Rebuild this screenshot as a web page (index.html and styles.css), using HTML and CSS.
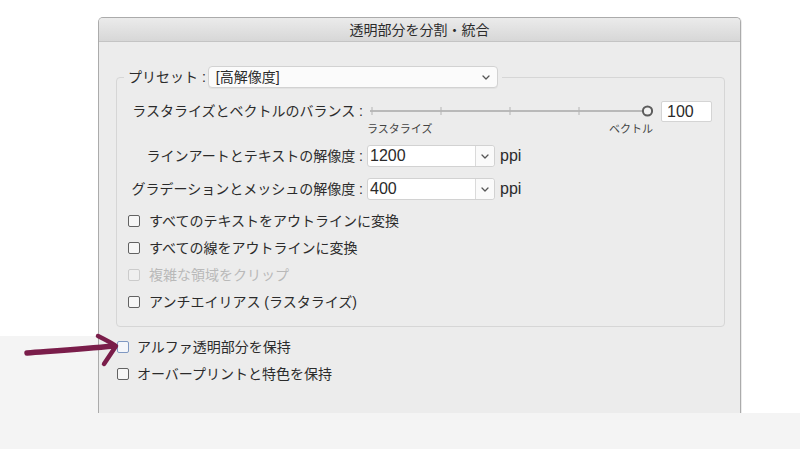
FILE: index.html
```html
<!DOCTYPE html>
<html lang="ja">
<head>
<meta charset="utf-8">
<title>透明部分を分割・統合</title>
<link rel="stylesheet" href="styles.css">
</head>
<body>
<div class="stage">
  <div class="dialog">
    <div class="titlebar">透明部分を分割・統合</div>
    <div class="content">
      <fieldset class="group">
        <legend class="preset">
          <span class="preset-label">プリセット :</span>
          <span class="popup">
            <span class="popup-value">[高解像度]</span>
            <svg class="chev" width="8" height="5" viewBox="0 0 8 5"><path d="M1 1 L4 4 L7 1" /></svg>
          </span>
        </legend>

        <div class="row slider-row">
          <span class="lbl">ラスタライズとベクトルのバランス :</span>
          <div class="ctrl">
            <svg class="slider" width="286" height="22" viewBox="0 0 286 22">
              <line class="track" x1="3" y1="11" x2="276" y2="11" />
              <line class="tick" x1="5" y1="7" x2="5" y2="15" />
              <line class="tick" x1="74" y1="7" x2="74" y2="15" />
              <line class="tick" x1="143" y1="7" x2="143" y2="15" />
              <line class="tick" x1="212" y1="7" x2="212" y2="15" />
              <circle class="knob" cx="280.5" cy="11" r="4.6" />
            </svg>
            <span class="numbox">100</span>
          </div>
        </div>

        <div class="row scale-row">
          <span></span>
          <div class="scale"><span>ラスタライズ</span><span>ベクトル</span></div>
        </div>

        <div class="row combo-row">
          <span class="lbl">ラインアートとテキストの解像度 :</span>
          <div class="ctrl">
            <span class="combo">
              <span class="combo-value">1200</span>
              <span class="combo-btn"><svg class="chev" width="8" height="5" viewBox="0 0 8 5"><path d="M1 1 L4 4 L7 1" /></svg></span>
            </span>
            <span class="unit">ppi</span>
          </div>
        </div>

        <div class="row combo-row">
          <span class="lbl">グラデーションとメッシュの解像度 :</span>
          <div class="ctrl">
            <span class="combo">
              <span class="combo-value">400</span>
              <span class="combo-btn"><svg class="chev" width="8" height="5" viewBox="0 0 8 5"><path d="M1 1 L4 4 L7 1" /></svg></span>
            </span>
            <span class="unit">ppi</span>
          </div>
        </div>

        <div class="checks">
          <div class="check"><span class="box"></span><span>すべてのテキストをアウトラインに変換</span></div>
          <div class="check"><span class="box"></span><span>すべての線をアウトラインに変換</span></div>
          <div class="check disabled"><span class="box"></span><span>複雑な領域をクリップ</span></div>
          <div class="check"><span class="box"></span><span>アンチエイリアス (ラスタライズ)</span></div>
        </div>
      </fieldset>

      <div class="outer-checks">
        <div class="check"><span class="box focus"></span><span>アルファ透明部分を保持</span></div>
        <div class="check"><span class="box"></span><span>オーバープリントと特色を保持</span></div>
      </div>
    </div>
  </div>

  <svg class="arrow" width="110" height="40" viewBox="0 0 110 40">
    <path class="shaft" d="M9 21 C 35 19, 65 17, 96 14" />
    <path d="M80 4 C 88 8, 94 11, 98 14 C 94 20, 90 26, 86 32" />
  </svg>
</div>
</body>
</html>
```

FILE: styles.css
```css
* {
  box-sizing: border-box;
}

html, body {
  margin: 0;
  padding: 0;
  background: #ffffff;
}

body {
  font-family: "Liberation Sans", "Noto Sans CJK JP", sans-serif;
  color: #2b2b2b;
  font-size: 14px;
}

.stage {
  position: relative;
  width: 800px;
  height: 449px;
  overflow: hidden;
  padding: 17px 0 0 98px;
  background:
    linear-gradient(#f4f4f4, #f4f4f4) 0 336px / 98px 113px no-repeat,
    linear-gradient(#f4f4f4, #f4f4f4) 0 413px / 800px 36px no-repeat,
    #ffffff;
}

.dialog {
  width: 643px;
  height: 396px;
  border: 1px solid #ababab;
  border-bottom: none;
  border-radius: 5px 5px 0 0;
  background: #ececec;
  box-shadow: 1px 0 0 rgba(0, 0, 0, 0.08);
  display: flex;
  flex-direction: column;
}

.titlebar {
  height: 24px;
  flex: none;
  border-bottom: 1px solid #c4c4c4;
  border-radius: 4px 4px 0 0;
  background: linear-gradient(#ebebeb, #d7d7d7);
  text-align: center;
  font-family: "Noto Sans CJK JP", sans-serif;
  font-size: 14px;
  line-height: 23px;
  color: #2b2b2b;
}

.content {
  flex: 1;
  padding: 24px 15px 0 17px;
}

.group {
  margin: 0;
  padding: 12px 0 14px 0;
  border: 1px solid #d6d6d6;
  border-radius: 4px;
  min-width: 0;
}

.preset {
  margin-left: 7px;
  padding: 0 4px 0 4px;
  display: flex;
  align-items: center;
  height: 22px;
}

.preset-label {
  line-height: 20px;
  margin-right: 2px;
  white-space: nowrap;
}

.popup {
  width: 290px;
  height: 22px;
  display: flex;
  align-items: center;
  justify-content: space-between;
  padding: 0 7px 0 7px;
  background: #fbfbfb;
  border: 1px solid #d2d2d2;
  border-radius: 4px;
  box-shadow: 0 1px 0 rgba(0, 0, 0, 0.04);
}

.popup-value {
  line-height: 20px;
  font-size: 14px;
}

.chev path {
  fill: none;
  stroke: #555555;
  stroke-width: 1.3;
  stroke-linecap: round;
  stroke-linejoin: round;
}

.row {
  display: grid;
  grid-template-columns: 246px 1fr;
  column-gap: 4px;
  align-items: center;
  height: 22px;
}

.lbl {
  text-align: right;
  white-space: nowrap;
  line-height: 20px;
}

.ctrl {
  display: flex;
  align-items: center;
}

.slider {
  display: block;
}

.track {
  stroke: #a9a9a9;
  stroke-width: 1.6;
}

.tick {
  stroke: #b4b4b4;
  stroke-width: 1;
}

.knob {
  fill: #f2f2f2;
  stroke: #5c5c5c;
  stroke-width: 2;
}

.numbox {
  margin-left: 8px;
  width: 51px;
  height: 21px;
  background: #ffffff;
  border: 1px solid #d4d4d4;
  border-radius: 2px;
  padding-left: 5px;
  font-size: 16px;
  line-height: 19px;
  color: #2a2a2a;
}

.scale-row {
  height: 12px;
}

.scale {
  width: 286px;
  display: flex;
  justify-content: space-between;
  font-family: "Noto Sans CJK JP", sans-serif;
  font-size: 11px;
  line-height: 12px;
  color: #444444;
}

.combo-row {
  margin-top: 11px;
}

.combo {
  width: 128px;
  height: 22px;
  display: flex;
  background: #ffffff;
  border: 1px solid #d2d2d2;
  border-radius: 3px;
}

.combo-value {
  flex: 1;
  padding-left: 2px;
  font-size: 16px;
  line-height: 20px;
  color: #2a2a2a;
}

.combo-btn {
  width: 19px;
  border-left: 1px solid #dadada;
  background: #fafafa;
  border-radius: 0 3px 3px 0;
  display: flex;
  align-items: center;
  justify-content: center;
}

.unit {
  margin-left: 5px;
  font-size: 16px;
  line-height: 20px;
  color: #2b2b2b;
}

.checks {
  margin-top: 11px;
  padding-left: 11px;
  display: flex;
  flex-direction: column;
  gap: 7px;
}

.check {
  display: flex;
  align-items: center;
  gap: 9px;
  height: 20px;
  line-height: 20px;
  white-space: nowrap;
}

.box {
  width: 12px;
  height: 12px;
  flex: none;
  border: 1px solid #626262;
  border-radius: 2px;
  background: #f6f6f6;
}

.box.focus {
  border-color: #7f98c2;
  background: #f4f6fa;
}

.check.disabled {
  color: #b9b9b9;
}

.check.disabled .box {
  border-color: #cbcbcb;
  background: #efefef;
}

.outer-checks {
  margin-top: 10px;
  padding-left: 1px;
  display: flex;
  flex-direction: column;
  gap: 7px;
}

.outer-checks .check {
  gap: 8px;
}

.arrow {
  position: absolute;
  left: 18px;
  top: 332px;
}

.arrow path {
  fill: none;
  stroke: #7a1d4a;
  stroke-width: 4.5;
  stroke-linecap: round;
  stroke-linejoin: round;
}

.arrow .shaft {
  stroke-width: 5.5;
}
```
